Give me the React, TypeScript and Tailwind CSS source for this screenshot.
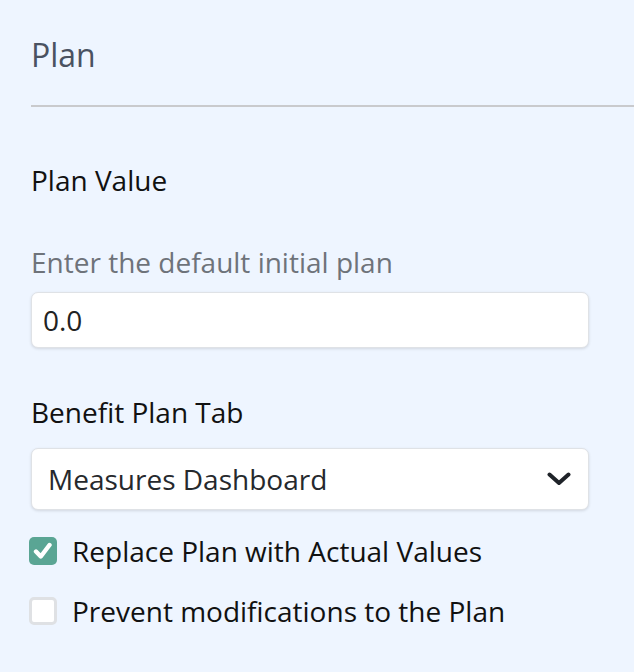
import React from "react";

export default function App() {
  return (
    <div
      className="w-[634px] h-[672px] bg-[#eef5ff] overflow-hidden"
      style={{ fontFamily: '"Open Sans", "Noto Sans", sans-serif' }}
    >
      <div className="pl-[31px] pt-[33px]">
        <h2 className="text-[32px] leading-[44px] text-[#4a5261] font-normal">Plan</h2>
        <div className="mt-[28px] h-[2px] bg-[#c9cacd]" />
        <div className="pr-[45px]">
          <div className="mt-[54px] text-[28px] leading-[38px] text-[#111111]">Plan Value</div>
          <div className="mt-[44px] text-[28px] leading-[38px] text-[#6e737a]">
            Enter the default initial plan
          </div>
          <div className="mt-[11px] h-[56px] rounded-[7px] border border-[#dfe2e6] bg-white shadow-[0_1px_3px_rgba(0,0,0,0.12)] flex items-center pl-[11px]">
            <span className="text-[28px] leading-[38px] text-[#222222]">0.0</span>
          </div>
          <div className="mt-[45px] text-[28px] leading-[38px] text-[#111111]">Benefit Plan Tab</div>
          <div className="mt-[17px] h-[62px] rounded-[7px] border border-[#dfe2e6] bg-white shadow-[0_1px_3px_rgba(0,0,0,0.12)] flex items-center justify-between pl-[16px] pr-[17px]">
            <span className="text-[28px] leading-[38px] text-[#26292d]">Measures Dashboard</span>
            <svg width="24" height="14" viewBox="0 0 24 14" fill="none">
              <path
                d="M2.5 2.5 L12 11 L21.5 2.5"
                stroke="#1f2329"
                strokeWidth="4"
                strokeLinecap="round"
                strokeLinejoin="round"
              />
            </svg>
          </div>
          <div className="mt-[22px] flex flex-col gap-[22px]">
            <label className="flex items-center h-[38px]">
              <span className="w-[28px] h-[28px] rounded-[5px] bg-[#5aa594] flex items-center justify-center -ml-[2px]">
                <svg width="20" height="18" viewBox="0 0 20 18" fill="none">
                  <path
                    d="M3 9.5 L7.8 14.5 L16.5 3"
                    stroke="white"
                    strokeWidth="4.4"
                    strokeLinecap="round"
                    strokeLinejoin="round"
                  />
                </svg>
              </span>
              <span className="ml-[15px] text-[28px] leading-[38px] text-[#111111]">
                Replace Plan with Actual Values
              </span>
            </label>
            <label className="flex items-center h-[38px]">
              <span className="w-[28px] h-[28px] rounded-[5px] bg-white border-[3px] border-[#dfe1e4] -ml-[2px]" />
              <span className="ml-[15px] text-[28px] leading-[38px] text-[#111111]">
                Prevent modifications to the Plan
              </span>
            </label>
          </div>
        </div>
      </div>
    </div>
  );
}
